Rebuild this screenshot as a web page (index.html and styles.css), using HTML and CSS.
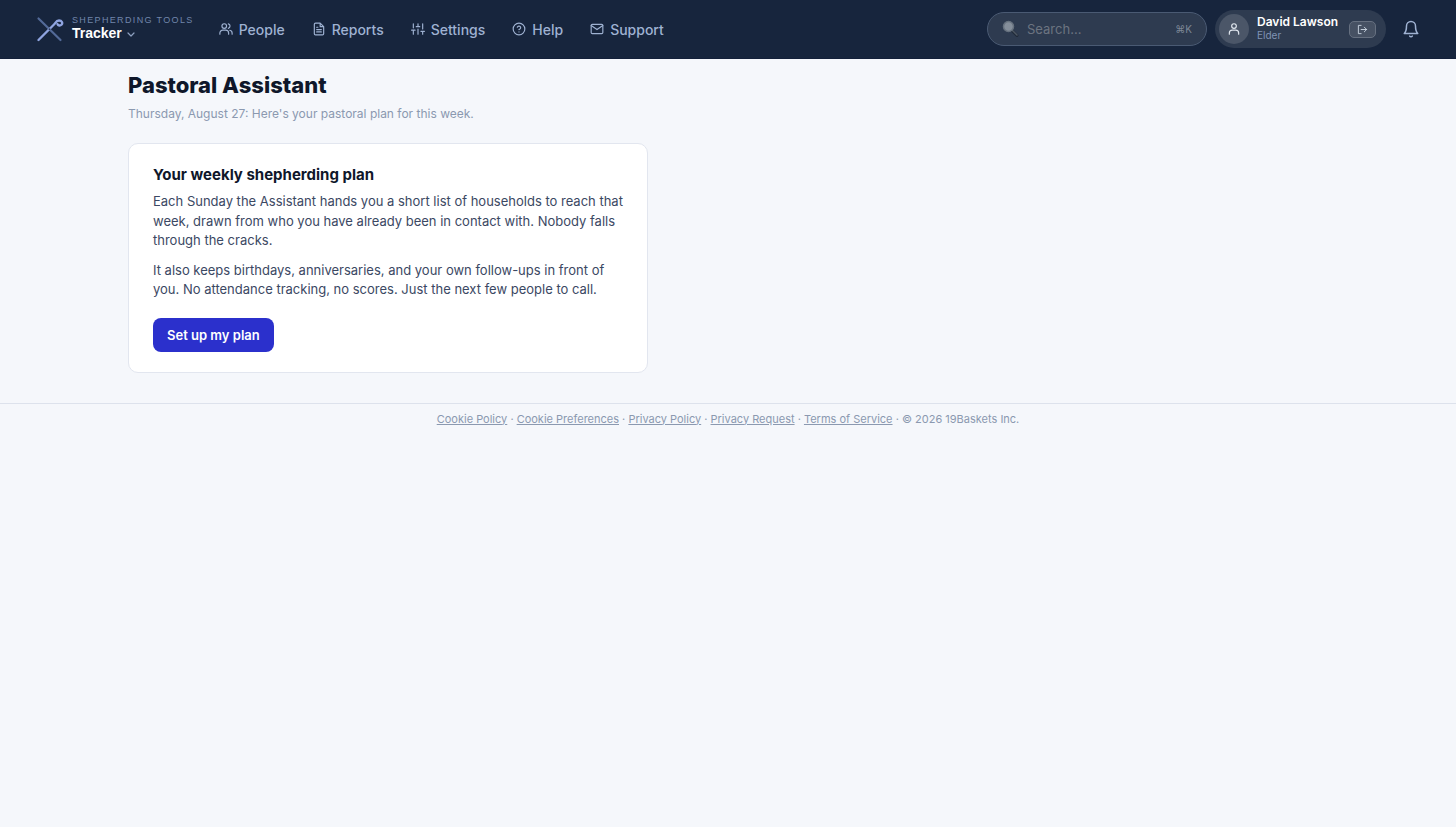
FILE: index.html
```html
<!DOCTYPE html>
<html lang="en">
<head>
  <meta charset="UTF-8">
  <meta name="viewport" content="width=device-width, initial-scale=1.0">
  <title>Pastoral Assistant</title>
  <link rel="stylesheet" href="styles.css">
</head>
<body>
  <header class="topbar">
    <button type="button" class="brand">
      <svg class="brand-mark" viewBox="0 0 28 28" fill="none" stroke-linecap="round" stroke-linejoin="round">
        <path d="M2.500 3.500L24.500 25" stroke="#536a98" stroke-width="2.200"/>
        <path d="M2.500 25L18 9.500C19.500 8 20 5.500 23 5.500C26 5.500 27 8.200 25.500 9.700C24.200 11 22 10.700 21.500 9.200" stroke="#8fa4e0" stroke-width="2.300"/>
        <circle cx="13.500" cy="14.200" r="1" fill="#2c3c5c"/>
      </svg>
      <span class="brand-text">
        <span class="brand-suite">SHEPHERDING TOOLS</span>
        <span class="brand-app">Tracker
          <svg class="chevron" viewBox="0 0 10 10" fill="none" stroke="currentColor" stroke-width="1.200" stroke-linecap="round" stroke-linejoin="round"><path d="M2 4l3 3 3-3"/></svg>
        </span>
      </span>
    </button>

    <nav class="nav">
      <a href="#people">
        <svg class="icon" viewBox="0 0 24 24"><circle cx="9" cy="7" r="4"/><path d="M1.500 21v-2a5 5 0 0 1 5-5h5a5 5 0 0 1 5 5v2M16 3.200a4 4 0 0 1 0 7.700M18.500 14.200a5 5 0 0 1 4 4.800v2"/></svg>
        People
      </a>
      <a href="#reports">
        <svg class="icon" viewBox="0 0 24 24"><path d="M14 2H6a2 2 0 0 0-2 2v16a2 2 0 0 0 2 2h12a2 2 0 0 0 2-2V8zM14 2v6h6M8 13h8M8 17h8M8 9h2"/></svg>
        Reports
      </a>
      <a href="#settings">
        <svg class="icon" viewBox="0 0 24 24"><path d="M4 21v-7M4 10V3M12 21v-9M12 8V3M20 21v-5M20 12V3M1 14h6M9 8h6M17 16h6"/></svg>
        Settings
      </a>
      <a href="#help">
        <svg class="icon" viewBox="0 0 24 24"><circle cx="12" cy="12" r="10"/><path d="M9.100 9a3 3 0 0 1 5.800 1c0 2-3 3-3 3M12 17v.1"/></svg>
        Help
      </a>
      <a href="#support">
        <svg class="icon" viewBox="0 0 24 24"><rect x="2" y="4" width="20" height="16" rx="2"/><path d="M2 6l10 7 10-7"/></svg>
        Support
      </a>
    </nav>

    <div class="tools">
      <label class="search">
        <svg class="search-icon" viewBox="0 0 18 18">
          <path d="M11 10.500L16 15.500" stroke="#202a38" stroke-width="3" stroke-linecap="round"/>
          <path d="M11 10L16 15" stroke="#4b5562" stroke-width="1.500" stroke-linecap="round"/>
          <circle cx="7.500" cy="6.500" r="5" fill="#848e9a" stroke="#66717e" stroke-width="1.500"/>
        </svg>
        <input type="text" placeholder="Search..." aria-label="Search">
        <kbd>⌘K</kbd>
      </label>

      <div class="user">
        <span class="avatar">
          <svg class="icon" viewBox="0 0 24 24"><circle cx="12" cy="7" r="4"/><path d="M4 21v-2a5 5 0 0 1 5-5h6a5 5 0 0 1 5 5v2"/></svg>
        </span>
        <span class="user-text">
          <span class="user-name">David Lawson</span>
          <span class="user-role">Elder</span>
        </span>
        <button type="button" class="logout" aria-label="Sign out">
          <svg class="icon" viewBox="0 0 24 24"><path d="M9 21H3V3h6M16 17l5-5-5-5M21 12H9"/></svg>
        </button>
      </div>

      <button type="button" class="bell" aria-label="Notifications">
        <svg class="icon" viewBox="0 0 24 24"><path d="M18 8A6 6 0 0 0 6 8c0 7-3 10-3 10h18s-3-3-3-10M13.700 21.500a2 2 0 0 1-3.400 0"/></svg>
      </button>
    </div>
  </header>

  <main class="page">
    <h1>Pastoral Assistant</h1>
    <p class="subtitle">Thursday, August 27: Here's your pastoral plan for this week.</p>

    <section class="card">
      <h2>Your weekly shepherding plan</h2>
      <p>Each Sunday the Assistant hands you a short list of households to reach that week, drawn from who you have already been in contact with. Nobody falls through the cracks.</p>
      <p>It also keeps birthdays, anniversaries, and your own follow-ups in front of you. No attendance tracking, no scores. Just the next few people to call.</p>
      <button type="button" class="primary">Set up my plan</button>
    </section>
  </main>

  <footer class="footer">
    <a href="#cookies">Cookie Policy</a> ·
    <a href="#preferences">Cookie Preferences</a> ·
    <a href="#privacy">Privacy Policy</a> ·
    <a href="#request">Privacy Request</a> ·
    <a href="#terms">Terms of Service</a> ·
    © 2026 19Baskets Inc.
  </footer>
</body>
</html>
```

FILE: styles.css
```css
* {
  box-sizing: border-box;
}

body {
  margin: 0;
  background: #f5f7fb;
  color: #0f172a;
  font-family: Inter, "Liberation Sans", sans-serif;
  font-size: 13px;
}

button {
  font-family: inherit;
  cursor: pointer;
}

.icon {
  display: block;
  flex: none;
  width: 14px;
  height: 14px;
  fill: none;
  stroke: currentColor;
  stroke-width: 2;
  stroke-linecap: round;
  stroke-linejoin: round;
}

/* Top bar */
.topbar {
  display: flex;
  align-items: center;
  height: 59px;
  padding: 0 36px;
  border-bottom: 1px solid #13203a;
  background: #17253d;
}

.brand {
  display: flex;
  align-items: center;
  gap: 8px;
  padding: 0;
  border: none;
  background: none;
  text-align: left;
  font-family: "Liberation Sans", Arial, sans-serif;
}

.brand-mark {
  width: 28px;
  height: 28px;
}

.brand-text {
  display: flex;
  flex-direction: column;
  padding-bottom: 2px;
}

.brand-suite {
  color: #7185ab;
  font-size: 9px;
  line-height: 11px;
  letter-spacing: 0.15em;
}

.brand-app {
  display: flex;
  align-items: center;
  gap: 4px;
  color: #fff;
  font-size: 14px;
  font-weight: 700;
  line-height: 15px;
}

.chevron {
  width: 10px;
  height: 10px;
  color: #8da0c0;
}

.nav {
  display: flex;
  gap: 27px;
  margin-left: 25px;
}

.nav a {
  display: flex;
  align-items: center;
  gap: 6px;
  color: #9fb2d2;
  font-size: 14px;
  font-weight: 500;
  text-decoration: none;
}

.tools {
  display: flex;
  align-items: center;
  gap: 8px;
  margin-left: auto;
}

.search {
  display: flex;
  align-items: center;
  width: 220px;
  height: 34px;
  padding: 0 14px 0 13px;
  border: 1px solid #4a5a73;
  border-radius: 17px;
  background: #2e3b50;
}

.search-icon {
  flex: none;
  width: 18px;
  height: 18px;
}

.search input {
  flex: 1;
  min-width: 0;
  padding: 0 8px;
  border: none;
  outline: none;
  background: none;
  color: #fff;
  font-family: inherit;
  font-size: 13px;
}

.search input::placeholder {
  color: #6c7480;
}

.search kbd {
  color: #7d8796;
  font-family: inherit;
  font-size: 10px;
}

.user {
  display: flex;
  align-items: center;
  gap: 8px;
  height: 38px;
  padding: 0 10px 0 4px;
  border-radius: 19px;
  background: #2e3b50;
}

.avatar {
  display: grid;
  place-items: center;
  width: 30px;
  height: 30px;
  border-radius: 50%;
  background: #4b5668;
  color: #e2e8f0;
}

.user-text {
  display: flex;
  flex-direction: column;
  min-width: 84px;
  padding-bottom: 2px;
}

.user-name {
  color: #fff;
  font-size: 12px;
  font-weight: 600;
  line-height: 14px;
}

.user-role {
  color: #8093b5;
  font-size: 10px;
  line-height: 12px;
}

.logout {
  display: grid;
  place-items: center;
  width: 27px;
  height: 17px;
  padding: 0;
  border: 1px solid #667080;
  border-radius: 5px;
  background: #465163;
  color: #cbd5e1;
}

.logout .icon {
  width: 11px;
  height: 11px;
}

.bell {
  margin-left: 8px;
  padding: 0;
  border: none;
  background: none;
  color: #9fb2d2;
}

.bell .icon {
  width: 18px;
  height: 18px;
}

/* Content */
.page {
  max-width: 1200px;
  margin: 0 auto;
  padding: 12px 0 30px;
}

h1 {
  margin: 0;
  font-size: 22px;
  font-weight: 800;
  line-height: 28px;
}

.subtitle {
  margin: 6px 0 20px;
  color: #8b99b0;
  font-size: 12px;
  line-height: 18px;
}

.card {
  max-width: 520px;
  padding: 20px 24px;
  border: 1px solid #e2e6ef;
  border-radius: 10px;
  background: #fff;
}

.card h2 {
  margin: 0 0 6px;
  font-size: 15px;
  font-weight: 700;
  line-height: 22px;
}

.card p {
  margin: 0 0 10px;
  color: #3b4863;
  font-size: 13px;
  line-height: 1.5;
}

.primary {
  display: block;
  height: 34px;
  margin-top: 18px;
  padding: 0 14px;
  border: none;
  border-radius: 8px;
  background: #2b30cc;
  color: #fff;
  font-size: 13px;
  font-weight: 600;
}

/* Footer */
.footer {
  padding: 6px 16px;
  border-top: 1px solid #dde2ec;
  color: #8b99b0;
  font-size: 11px;
  line-height: 18px;
  text-align: center;
}

.footer a {
  color: inherit;
}
```
